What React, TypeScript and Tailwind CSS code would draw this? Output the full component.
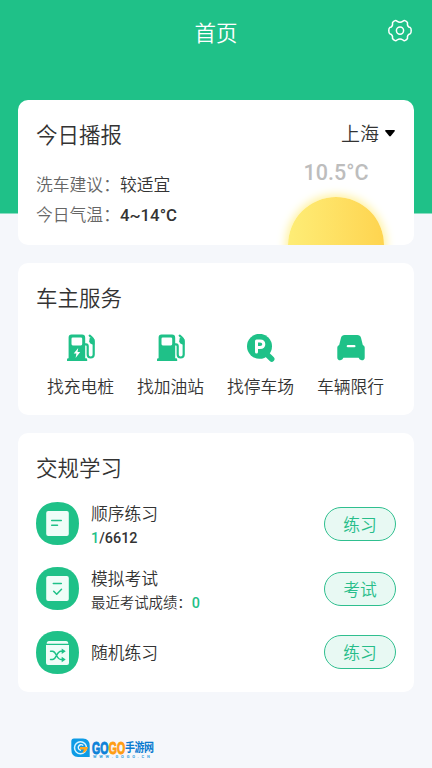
import type { ReactNode } from "react";

interface Service {
  label: string;
  icon: ReactNode;
}

interface StudyItem {
  title: string;
  detail?: ReactNode;
  action: string;
  icon: ReactNode;
  className: string;
}

function GearIcon() {
  return (
    <svg
      width="24"
      height="24"
      viewBox="0 0 24 24"
      fill="none"
      stroke="white"
      strokeWidth="1.5"
      strokeLinejoin="round"
    >
      <path d="M7.1 1.6Q8.1 1.3 9 2.2Q12 4.3 15 2.2Q15.9 1.3 16.9 1.6Q18.9 2.4 19.5 3.8Q18.9 7.7 22.3 8.6Q23.2 9 23.2 11.6Q23.2 14.2 22.3 14.7Q18.9 15.6 19.5 19.4Q18.9 20.8 16.9 21.6Q15.9 21.9 15 21Q12 18.9 9 21Q8.1 21.9 7.1 21.6Q5.1 20.8 4.5 19.4Q5.1 15.6 1.7 14.7Q.8 14.2 .8 11.6Q.8 9 1.7 8.6Q5.1 7.7 4.5 3.8Q5.1 2.4 7.1 1.6Z" />
      <circle cx="12" cy="11.6" r="3.6" />
    </svg>
  );
}

function PumpIcon({ charging }: { charging?: boolean }) {
  return (
    <svg width="30" height="28" viewBox="0 0 30 28" fill="none">
      <path
        fill="#1fc188"
        fillRule="evenodd"
        d="M5.5 .5H16Q19.2 .5 19.2 3.7V24.2H20Q21.2 24.2 21.2 25.5V27H1V25.5Q1 24.2 2.2 24.2H2.6V3.4Q2.6 .5 5.5 .5ZM6.8 3.5Q5.5 3.5 5.5 4.8V10.1Q5.5 11.4 6.8 11.4H14.9Q16.2 11.4 16.2 10.1V4.8Q16.2 3.5 14.9 3.5Z"
      />
      <path
        stroke="#1fc188"
        strokeWidth="2.2"
        strokeLinecap="round"
        strokeLinejoin="round"
        d="M19 10.3H20Q21.7 10.3 21.7 12.2V20.5Q21.7 23.5 24.7 23.5Q27.7 23.5 27.7 20.5V7.2Q27.7 4.7 23.7 1.6"
      />
      <path fill="#1fc188" d="M23.8 3.5L28.4 5.3V10.5H26.3Q23.2 9.5 23.2 7.3Z" />
      {charging && (
        <path fill="white" d="M12.2 14L7.7 19.6H10.4L9.6 23.9L14.2 17.9H11.5Z" />
      )}
    </svg>
  );
}

function ParkingIcon() {
  return (
    <svg width="30" height="28" viewBox="0 0 30 28" fill="none">
      <path
        stroke="#1fc188"
        strokeWidth="5.5"
        strokeLinecap="round"
        d="M20 19.5L25.7 25"
      />
      <circle cx="13.5" cy="12.3" r="12.5" fill="#1fc188" />
      <path
        stroke="white"
        strokeWidth="3"
        strokeLinecap="round"
        strokeLinejoin="round"
        d="M10.5 18V7H14Q17.8 7 17.8 10.3T14 13.6H10.8"
      />
    </svg>
  );
}

function CarIcon() {
  return (
    <svg width="30" height="28" viewBox="0 0 30 28" fill="none">
      <path
        fill="#1fc188"
        d="M8.7 1H21.3Q24.2 1 25 3.8L26.8 11Q28.7 11.5 28.7 13.5V23.4Q28.7 26.2 25.7 26.2Q23.4 26.2 22.6 23.8H7.4Q6.6 26.2 4.3 26.2Q1.3 26.2 1.3 23.4V13.5Q1.3 11.5 3.2 11L5 3.8Q5.8 1 8.7 1Z"
      />
      <path
        stroke="white"
        strokeWidth="2.2"
        strokeLinecap="round"
        d="M11.8 12.2H18.4"
      />
    </svg>
  );
}

function StudyBadge({ children }: { children: ReactNode }) {
  return (
    <svg
      width="43"
      height="43"
      viewBox="0 0 43 43"
      fill="none"
      className="shrink-0"
    >
      <path
        fill="#1fc188"
        d="M21.5 0C35 0 43 8 43 21.5S35 43 21.5 43S0 35 0 21.5S8 0 21.5 0Z"
      />
      {children}
    </svg>
  );
}

const services: Service[] = [
  { label: "找充电桩", icon: <PumpIcon charging /> },
  { label: "找加油站", icon: <PumpIcon /> },
  { label: "找停车场", icon: <ParkingIcon /> },
  { label: "车辆限行", icon: <CarIcon /> },
];

const studyItems: StudyItem[] = [
  {
    title: "顺序练习",
    detail: (
      <span className="font-medium">
        <span className="text-[#1fc188]">1</span>/6612
      </span>
    ),
    action: "练习",
    className: "h-[65px]",
    icon: (
      <>
        <rect x="10.2" y="9" width="22.6" height="25" rx="2" fill="#effdf8" />
        <path
          stroke="#1fc188"
          strokeWidth="1.5"
          strokeLinecap="round"
          d="M15.7 18.6H25.3M15.7 23.3H21.5"
        />
      </>
    ),
  },
  {
    title: "模拟考试",
    detail: (
      <>
        最近考试成绩：
        <span className="font-medium text-[#1fc188]">0</span>
      </>
    ),
    action: "考试",
    className: "h-[65px]",
    icon: (
      <>
        <rect x="10.2" y="9" width="22.6" height="25" rx="2" fill="#effdf8" />
        <path
          stroke="#1fc188"
          strokeWidth="1.5"
          strokeLinecap="round"
          strokeLinejoin="round"
          d="M17.3 16.6H25.3M17.7 24.3L20.7 27.3L25.5 22.3"
        />
      </>
    ),
  },
  {
    title: "随机练习",
    action: "练习",
    className: "h-[62px]",
    icon: (
      <>
        <path
          fill="#effdf8"
          d="M13 10H30Q32.3 10 32.3 12.7H10.7Q10.7 10 13 10ZM10 14H33V32Q33 34 31 34H12Q10 34 10 32Z"
        />
        <path
          stroke="#1fc188"
          strokeWidth="1.4"
          strokeLinecap="round"
          strokeLinejoin="round"
          d="M14.5 20.3H16.5C20.5 20.3 20.5 28.5 25 28.5H27.8M14.5 28.5H16.5C20.5 28.5 20.5 20.3 25 20.3H27.8"
        />
        <path
          fill="#1fc188"
          d="M25.7 17.5L29.7 20.3L25.7 23ZM25.7 25.7L29.7 28.5L25.7 31.2Z"
        />
      </>
    ),
  },
];

function SiteLogo() {
  return (
    <div className="ml-[71px] mt-[46px] flex items-start gap-[2px]">
      <svg width="19" height="20" viewBox="0 0 19 20" fill="none">
        <path
          fill="#0d9be5"
          d="M3 .5H12Q18.7 .5 18.7 8V19H7Q.3 19 .3 11V3.5Q.3 .5 3 .5Z"
        />
        <circle cx="9.5" cy="9.7" r="6" stroke="#d9f3ff" strokeWidth="1.5" />
        <path
          stroke="#e7f7ff"
          strokeWidth="1.4"
          d="M12.3 7.5Q9.3 5.5 7.5 8.3Q6.5 11.5 10 12.3"
        />
        <path fill="#ffa51f" d="M9 9H17Q16 14 11.5 15L13 11.5H9Z" />
      </svg>
      <div className="pt-[2px]">
        <div className="flex h-[14px] items-center whitespace-nowrap font-bold">
          <svg width="33" height="15" viewBox="0 0 33 15" className="overflow-visible">
            <g
              fontFamily="Liberation Sans, sans-serif"
              fontSize="17"
              fontWeight="bold"
              strokeWidth="1"
            >
              <text
                x="0"
                y="13.5"
                transform="scale(.62 1)"
                fill="#0d82d8"
                stroke="#0d82d8"
              >
                GO
              </text>
              <text
                x="27"
                y="13.5"
                transform="scale(.62 1)"
                fill="#ff9d12"
                stroke="#ff9d12"
              >
                GO
              </text>
            </g>
          </svg>
          <span className="origin-left scale-y-[1.2] pt-px text-[10px] leading-[14px] tracking-[-0.5px] text-[#0879cf]">
            手游网
          </span>
        </div>
        <div className="mt-px pl-px text-[4px] font-bold leading-[4px] tracking-[2.8px] text-[#36a5e2]">
          WWW.GOGO.CN
        </div>
      </div>
    </div>
  );
}

export default function App() {
  return (
    <div className="h-[768px] w-[432px] overflow-hidden bg-[#f5f7fb] bg-[linear-gradient(#1fc188,#1fc188)] bg-[length:100%_213.5px] bg-no-repeat font-['Roboto','Noto_Sans_CJK_SC',sans-serif] font-[350] text-[#333]">
      <header className="grid h-[100px] grid-cols-[1fr_auto_1fr] items-start px-[20.5px] text-white">
        <h1 className="col-start-2 pt-[18px] text-[21.5px] leading-8">首页</h1>
        <button className="mt-[19px] justify-self-end" aria-label="设置">
          <GearIcon />
        </button>
      </header>

      <main className="px-[18px]">
        {/* Weather */}
        <section className="flex h-[145px] justify-between overflow-hidden rounded-[10px] bg-white px-[18px] pt-[19px]">
          <div>
            <h2 className="pt-px text-[21.5px] leading-8">今日播报</h2>
            <dl className="mt-[18px] text-[16.8px] leading-[30px]">
              <div className="flex">
                <dt className="text-[#666]">洗车建议：</dt>
                <dd>较适宜</dd>
              </div>
              <div className="flex">
                <dt className="text-[#666]">今日气温：</dt>
                <dd className="font-medium">4~14°C</dd>
              </div>
            </dl>
          </div>
          <div className="flex w-[120px] flex-col items-center">
            <button className="flex items-center gap-[6px] self-end pr-px text-[19px] leading-8">
              上海
              <svg width="10" height="7" viewBox="0 0 10 7" className="mb-[3px]">
                <path d="M.8 0H9.2Q10.4 .3 9.5 1.5L5.8 6Q5 6.8 4.2 6L.5 1.5Q-.4 .3 .8 0Z" />
              </svg>
            </button>
            <span className="mt-[10px] text-[21.5px] font-medium leading-6 text-[#bdbdbd]">
              10.5°C
            </span>
            <div className="mt-[12px] h-[96px] w-[96px] shrink-0 rounded-full bg-linear-to-r from-[#feed76] to-[#fed44f] shadow-[0_0_10px_2px_#fff19a]" />
          </div>
        </section>

        {/* Owner services */}
        <section className="mt-[18px] h-[152px] rounded-[10px] bg-white px-[18px] pt-[20px]">
          <h2 className="text-[21.5px] leading-8">车主服务</h2>
          <div className="mt-[19px] grid grid-cols-4">
            {services.map((service) => (
              <button
                key={service.label}
                className="flex flex-col items-center text-[16.8px]"
              >
                {service.icon}
                <span className="mt-[13px] pr-px leading-6">{service.label}</span>
              </button>
            ))}
          </div>
        </section>

        {/* Traffic rules study */}
        <section className="mt-[18px] h-[259px] rounded-[10px] bg-white px-[18px] pt-[20px]">
          <h2 className="text-[21.5px] leading-8">交规学习</h2>
          <div className="mt-[6px]">
            {studyItems.map((item) => (
              <div
                key={item.title}
                className={`flex items-center ${item.className}`}
              >
                <StudyBadge>{item.icon}</StudyBadge>
                <div
                  className={`ml-[12px] flex-1 ${item.detail ? "pt-[3px]" : "pt-px"}`}
                >
                  <div className="text-[16.8px] leading-[26px]">
                    {item.title}
                  </div>
                  {item.detail && (
                    <div className="text-[14.4px] leading-[23px]">
                      {item.detail}
                    </div>
                  )}
                </div>
                <button className="h-[34px] w-[72px] rounded-full border-[1.5px] border-[#2fbf8f] bg-[#e8f9f3] pt-[3px] text-[16.8px] leading-[29px] text-[#27bd8a]">
                  {item.action}
                </button>
              </div>
            ))}
          </div>
        </section>
      </main>

      <SiteLogo />
    </div>
  );
}
